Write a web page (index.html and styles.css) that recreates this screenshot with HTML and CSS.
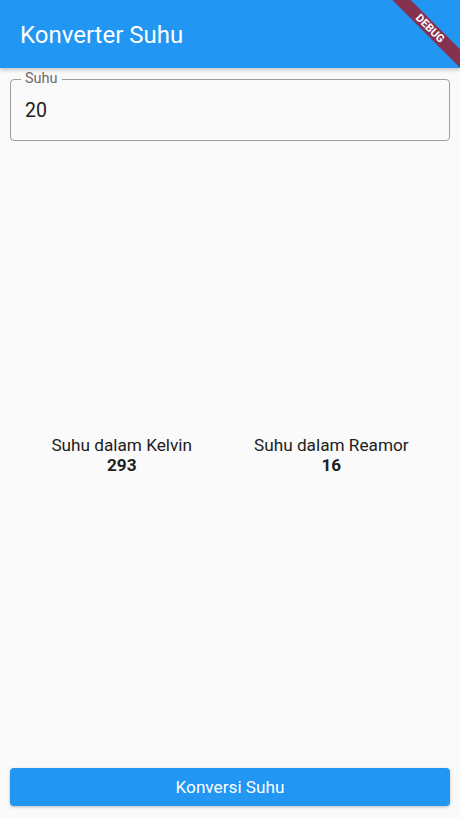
FILE: index.html
```html
<!DOCTYPE html>
<html>
<head>
<meta charset="utf-8">
<link rel="stylesheet" href="styles.css">
</head>
<body>
<div class="app">
  <header class="appbar"><h1 class="title">Konverter Suhu</h1></header>
  <main class="content">
    <div class="field">
      <span class="label">Suhu</span>
      <div class="value">20</div>
    </div>
    <div class="results">
      <div class="result">
        <div class="result-label">Suhu dalam Kelvin</div>
        <div class="result-value">293</div>
      </div>
      <div class="result">
        <div class="result-label">Suhu dalam Reamor</div>
        <div class="result-value">16</div>
      </div>
    </div>
    <button class="btn">Konversi Suhu</button>
  </main>
  <div class="banner">DEBUG</div>
</div>
</body>
</html>
```
FILE: styles.css
```css
* { box-sizing: border-box; }
html, body { margin: 0; padding: 0; }
body {
  background: #fafafa;
  font-family: Roboto, "Noto Sans", sans-serif;
  color: #212121;
}
.app {
  position: relative;
  width: 460px;
  height: 818px;
  overflow: hidden;
  display: flex;
  flex-direction: column;
}
.appbar {
  height: 68px;
  background: #2196f3;
  display: flex;
  align-items: center;
  padding: 0 20px;
  box-shadow: 0 2px 4px rgba(0,0,0,0.22);
  position: relative;
  z-index: 1;
}
.title {
  margin: 0;
  color: #fff;
  font-size: 24px;
  font-weight: 400;
  padding-top: 2px;
}
.content {
  flex: 1;
  display: flex;
  flex-direction: column;
  padding: 11px 10px 12px;
}
.field {
  position: relative;
  height: 62px;
  border: 1px solid #9e9e9e;
  border-radius: 4px;
  padding: 0 14px;
  display: flex;
  align-items: center;
}
.label {
  position: absolute;
  left: 10px;
  top: -9px;
  font-size: 14.5px;
  line-height: 16px;
  color: #6b6b6b;
  padding: 0 4px;
  background: #fafafa;
}
.value {
  font-size: 19.5px;
  color: #212121;
}
.results {
  flex: 1;
  display: flex;
  justify-content: center;
  gap: 62px;
  align-items: center;
  margin: 0 -10px;
}
.result { text-align: center; }
.result-label { font-size: 17.2px; line-height: 20px; }
.result-value { font-size: 17.2px; font-weight: 700; line-height: 20px; }
.btn {
  height: 38px;
  border: none;
  border-radius: 4px;
  background: #2196f3;
  color: #fff;
  font-family: Roboto, "Noto Sans", sans-serif;
  font-size: 17.2px;
  box-shadow: 0 1px 3px rgba(0,0,0,0.25);
}
.banner {
  position: absolute;
  width: 124px;
  height: 13px;
  left: 368px;
  top: 22px;
  transform: rotate(45deg);
  background: #86314f;
  color: #fff;
  font-size: 11px;
  font-weight: 700;
  line-height: 13px;
  text-align: center;
  z-index: 2;
}
```
